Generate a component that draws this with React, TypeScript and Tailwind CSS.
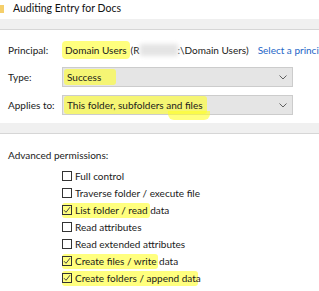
import { ReactNode } from 'react';

const hl = 'bg-[rgba(255,255,40,0.6)]';

function Chevron() {
  return (
    <svg width="8" height="5" viewBox="0 0 8 5" className="mr-[5px] shrink-0">
      <polyline points="0.5,0.5 4,4 7.5,0.5" fill="none" stroke="#606060" strokeWidth="1" />
    </svg>
  );
}

function Select({ children }: { children: ReactNode }) {
  return (
    <div className="w-[231px] shrink-0 h-[20px] flex items-center justify-between bg-[#e5e5e5] border border-[#cccccc] pl-[1px]">
      <div className="flex items-center h-full">{children}</div>
      <Chevron />
    </div>
  );
}

function Check({ checked, label, mark }: { checked?: boolean; label: string; mark?: string }) {
  return (
    <div className="h-[17px] flex items-center pl-[54px]">
      <div className="relative flex items-center">
        {mark && (
          <span className={`absolute left-[0px] top-[-2px] h-[15px] rounded-[3px] ${hl}`} style={{ width: mark }} />
        )}
        <span className="relative w-[10px] h-[10px] border border-[#333] flex items-center justify-center">
          {checked && (
            <svg width="8" height="8" viewBox="0 0 8 8">
              <polyline points="1,4.2 3,6.3 7,1.2" fill="none" stroke="#444" strokeWidth="1" />
            </svg>
          )}
        </span>
        <span className="relative ml-[3px] text-[#1a1a1a]">{label}</span>
      </div>
    </div>
  );
}

export default function App() {
  return (
    <div className="w-[319px] h-[291px] bg-white overflow-hidden text-[10px] leading-none text-[#1a1a1a]" style={{ fontFamily: 'Lato, "Noto Sans", sans-serif' }}>
      {/* title */}
      <div className="h-[19px] flex items-center">
        <div className="w-[4px] h-[8px] bg-[#f5cf6b] mt-[-2px]" />
        <span className="ml-[9px] text-[10.5px] text-[#111] mt-[-2px]">Auditing Entry for Docs</span>
      </div>
      <div className="h-[11px] bg-[#f0f0f0] border-b border-[#d6d6d6]" />

      <div className="px-2">
        <div className="mt-[10px] h-[20px] flex items-center whitespace-nowrap">
          <span className="w-[54px] shrink-0">Principal:</span>
          <span className={`shrink-0 px-[3px] py-[4px] rounded-[4px] ${hl}`}>Domain Users</span>
          <span className="shrink-0 ml-[1px]">(R</span>
          <span className="shrink-0 w-[38px] h-[12px] bg-[#e4e4e4] blur-[2px]" />
          <span className="shrink-0">:\Domain Users)</span>
          <span className="shrink-0 ml-[9px] text-[#2466c7]">Select a principal</span>
        </div>

        <div className="mt-[7px] h-[20px] flex items-center">
          <span className="w-[54px] shrink-0">Type:</span>
          <Select>
            <span className={`px-[3px] h-[16px] flex items-center rounded-[3px] w-[52px] ${hl}`}>Success</span>
          </Select>
        </div>

        <div className="mt-[8px] h-[20px] flex items-center">
          <span className="w-[54px] shrink-0">Applies to:</span>
          <Select>
            <span className="relative px-[3px] h-[18px] flex items-center">
              <span className={`absolute inset-y-0 left-0 rounded-[3px] w-[143px] ${hl}`} />
              <span className={`absolute left-[104px] top-[15px] w-[42px] h-[9px] rounded-b-[6px] ${hl}`} />
              <span className="relative">This folder, subfolders and files</span>
            </span>
          </Select>
        </div>
      </div>

      <div className="mt-[8px] h-[11px] bg-[#f0f0f0] border-b border-[#d6d6d6]" />

      <div className="px-2">
        <div className="mt-[13px] h-[16px] flex items-center">Advanced permissions:</div>
        <div className="mt-[4px]">
          <Check label="Full control" />
          <Check label="Traverse folder / execute file" />
          <Check checked label="List folder / read data" mark="88px" />
          <Check label="Read attributes" />
          <Check label="Read extended attributes" />
          <Check checked label="Create files / write data" mark="96px" />
          <Check checked label="Create folders / append data" mark="136px" />
        </div>
      </div>
    </div>
  );
}
